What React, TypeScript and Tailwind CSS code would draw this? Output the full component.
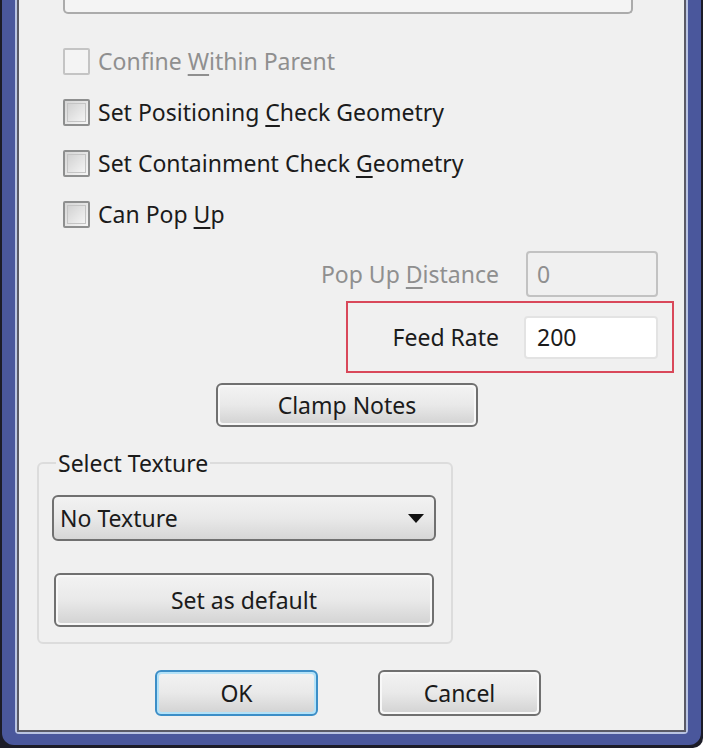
import React from "react";

const font = { fontFamily: '"Noto Sans", "Open Sans", sans-serif' };

function Check({ children, disabled }: { children: React.ReactNode; disabled?: boolean }) {
  return (
    <div className="h-[51px] flex items-center pl-[44px]">
      <div
        className={
          "w-[27px] h-[27px] rounded-[2px] border-2 " +
          (disabled
            ? "border-[#c4c4c4] bg-[#f4f4f4]"
            : "border-[#8e8f8f] bg-gradient-to-br from-[#d6d6d6] to-[#f6f6f6]")
        }
      >
        {!disabled && <div className="m-[2px] w-[19px] h-[19px] border border-[#c4c4c4] bg-gradient-to-br from-[#d2d2d2] to-[#f4f4f4]" />}
      </div>
      <span className={"ml-[8px] text-[23px] leading-none " + (disabled ? "text-[#8f8f8f]" : "text-[#1b1b1b]")}>
        {children}
      </span>
    </div>
  );
}

function Btn({ children, w, h, focused }: { children: React.ReactNode; w: string; h: string; focused?: boolean }) {
  return (
    <div
      className={
        w +
        " " +
        h +
        " rounded-[6px] border-2 p-[2px] " +
        (focused ? "border-[#3c8ec7] bg-[#b4e2f8]" : "border-[#707070] bg-[#f8f8f8]")
      }
    >
      <div className="w-full h-full rounded-[3px] bg-gradient-to-b from-[#f2f2f2] via-[#e9e9e9] to-[#d4d4d4] flex items-center justify-center text-[23px] text-[#1b1b1b] leading-none">
        {children}
      </div>
    </div>
  );
}

export default function App() {
  return (
    <div style={font} className="w-[703px] h-[748px] bg-[#1c1c28] px-[2px] pb-[3px] rounded-br-[10px]">
      <div className="w-full h-full bg-[#4a579c] px-[13px] pb-[11px] rounded-b-[12px]">
        <div className="w-full h-full bg-[#b9c3e2] px-[2px] pb-[2px] rounded-b-[4px]">
          <div className="w-full h-full border-x-2 border-b-2 border-[#5a5a66] bg-[#f0f0f0] flex flex-col">
            <div className="ml-[44px] w-[570px] h-[14px] border-x-2 border-b-2 border-[#ababab] rounded-b-[5px] bg-[#f4f4f4]" />
            <div className="mt-[22px]">
              <Check disabled>
                Confine <u className="underline-offset-[4px]">W</u>ithin Parent
              </Check>
              <Check>
                Set Positioning <u className="underline-offset-[4px]">C</u>heck Geometry
              </Check>
              <Check>
                Set Containment Check <u className="underline-offset-[4px]">G</u>eometry
              </Check>
              <Check>
                Can Pop <u className="underline-offset-[4px]">U</u>p
              </Check>
            </div>
            <div className="mt-[11px] flex items-center h-[46px]">
              <div className="w-[480px] text-right text-[23px] text-[#8f8f8f] leading-none">
                Pop Up <u className="underline-offset-[4px]">D</u>istance
              </div>
              <div className="ml-[27px] w-[132px] h-[46px] border-2 border-[#c2c2c2] rounded-[4px] bg-[#f0f0f0] flex items-center pl-[9px] text-[23px] text-[#8f8f8f] leading-none">
                0
              </div>
            </div>
            <div className="mt-[4px] ml-[327px] w-[328px] h-[72px] border-2 border-[#d9485a] flex items-center">
              <div className="w-[151px] text-right text-[23px] text-[#1b1b1b] leading-none">Feed Rate</div>
              <div className="ml-[25px] w-[134px] h-[43px] rounded-[4px] border-2 border-[#e3e3e3] bg-white flex items-center pl-[11px] text-[23px] text-[#1b1b1b] leading-none">
                200
              </div>
            </div>
            <div className="mt-[10px] ml-[197px]">
              <Btn w="w-[262px]" h="h-[44px]">Clamp Notes</Btn>
            </div>
            <fieldset className="mt-[22px] ml-[18px] w-[416px] border-2 border-[#dcdcdc] rounded-[6px] px-[13px] pb-[15px]">
              <legend className="ml-[4px] px-[2px] text-[23px] text-[#1b1b1b] leading-[28px]">Select Texture</legend>
              <div className="mt-[18px] w-[384px] h-[46px] rounded-[6px] border-2 border-[#707070] bg-gradient-to-b from-[#f2f2f2] via-[#e9e9e9] to-[#d6d6d6] flex items-center pl-[6px] pr-[10px] text-[23px] text-[#1b1b1b] leading-none">
                <span className="flex-1">No Texture</span>
                <svg width="16" height="9" viewBox="0 0 16 9">
                  <path d="M0 0 L16 0 L8 9 Z" fill="#111" />
                </svg>
              </div>
              <div className="mt-[32px] ml-[2px]">
                <Btn w="w-[380px]" h="h-[54px]">Set as default</Btn>
              </div>
            </fieldset>
            <div className="mt-[26px] ml-[136px] flex gap-[60px]">
              <Btn w="w-[163px]" h="h-[46px]" focused>OK</Btn>
              <Btn w="w-[163px]" h="h-[46px]">Cancel</Btn>
            </div>
          </div>
        </div>
      </div>
    </div>
  );
}
